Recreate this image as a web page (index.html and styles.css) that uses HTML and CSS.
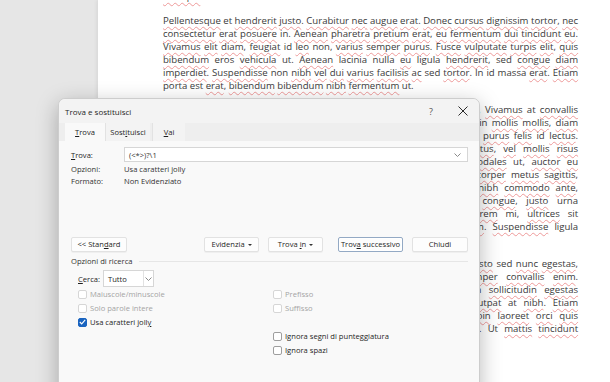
FILE: index.html
```html
<!DOCTYPE html>
<html lang="it">
  <head>
    <meta charset="utf-8" />
    <title>Trova e sostituisci</title>
    <link rel="stylesheet" href="styles.css">
  </head>
  <body>
    <div class="page">
      <div class="doc">
        <p>
          <span class="ln end"><u>tristique</u>.</span>
        </p>
        <p>
          <span class="ln"><u>Pellentesque</u> et <u>hendrerit</u> <u>justo</u>. <u>Curabitur</u> <u>nec</u> <u>augue</u> <u>erat</u>. <u>Donec</u> <u>cursus</u> <u>dignissim</u> <u>tortor</u>, <u>nec</u></span>
          <span class="ln"><u>consectetur</u> <u>erat</u> <u>posuere</u> in. <u>Aenean</u> <u>pharetra</u> <u>pretium</u> <u>erat</u>, <u>eu</u> <u>fermentum</u> <u>dui</u> <u>tincidunt</u> <u>eu</u>.</span>
          <span class="ln"><u>Vivamus</u> <u>elit</u> <u>diam</u>, <u>feugiat</u> id <u>leo</u> non, <u>varius</u> <u>semper</u> <u>purus</u>. <u>Fusce</u> <u>vulputate</u> <u>turpis</u> <u>elit</u>, <u>quis</u></span>
          <span class="ln"><u>bibendum</u> eros <u>vehicula</u> ut. <u>Aenean</u> lacinia nulla <u>eu</u> ligula <u>hendrerit</u>, sed <u>congue</u> <u>diam</u></span>
          <span class="ln"><u>imperdiet</u>. <u>Suspendisse</u> non <u>nibh</u> <u>vel</u> <u>dui</u> <u>varius</u> <u>facilisis</u> <u>ac</u> sed <u>tortor</u>. In id massa <u>erat</u>. <u>Etiam</u></span>
          <span class="ln end">porta est <u>erat</u>, <u>bibendum</u> <u>bibendum</u> <u>nibh</u> <u>fermentum</u> ut.</span>
        </p>
        <p>
          <span class="ln">Nam ultricies, lorem in dapibus tincidunt, augue lectus rhoncus nisl, <u>Vivamus</u> at <u>convallis</u></span>
          <span class="ln">nisi sapien quis magna. Donec elementum lectus et quam placerat in <u>mollis</u> <u>mollis</u>, <u>diam</u></span>
          <span class="ln">Integer aliquet tellus a tortor viverra, at tempor nunc posuere non <u>purus</u> <u>felis</u> id <u>lectus</u>.</span>
          <span class="ln">Aliquam erat volutpat. Quisque vitae nibh at nunc pretium <u>lectus</u>, <u>vel</u> <u>mollis</u> <u>risus</u></span>
          <span class="ln">Morbi tristique tempus nisl, eget pulvinar neque vitae nisl in <u>sodales</u> ut, <u>auctor</u> <u>eu</u></span>
          <span class="ln">odio. Nullam tempor, nibh vitae ultrices vestibulum, mauris <u>ullamcorper</u> <u>metus</u> <u>sagittis</u>,</span>
          <span class="ln">nec aliquet lorem sapien ac ipsum. Phasellus pharetra tellus at <u>nibh</u> <u>commodo</u> <u>ante</u>,</span>
          <span class="ln">Etiam gravida lectus vitae magna consequat, sed mollis leo <u>congue</u>, <u>justo</u> urna</span>
          <span class="ln">dignissim elit, vitae luctus nisi sapien sed nulla. Donec ut <u>lorem</u> mi, <u>ultrices</u> sit</span>
          <span class="ln">amet placerat at, condimentum non quam. Praesent a lacus <u>sem</u>. <u>Suspendisse</u> ligula</span>
          <span class="ln end">feugiat ipsum, vitae blandit dui.</span>
        </p>
        <p>
          <span class="ln">Duis efficitur mauris vel mi tristique, ut vehicula nisi pretium. Cras <u>justo</u> sed <u>nunc</u> <u>egestas</u>,</span>
          <span class="ln">ac posuere eros imperdiet. Nunc dictum ac mauris nec <u>semper</u> <u>convallis</u> <u>enim</u>.</span>
          <span class="ln">Maecenas pretium, mi vitae fringilla tincidunt, diam nibh quam <u>sollicitudin</u> <u>egestas</u></span>
          <span class="ln">neque nisl at est. Vestibulum faucibus ipsum ac sapien eu <u>volutpat</u> at <u>nibh</u>. <u>Etiam</u></span>
          <span class="ln">dapibus fermentum lacus, non ullamcorper magna tincidunt. <u>Proin</u> <u>laoreet</u> <u>orci</u> <u>quis</u></span>
          <span class="ln">ex pretium nec. Integer vitae metus in nisl fermentum maximus. Ut <u>mattis</u> <u>tincidunt</u></span>
          <span class="ln end">ante, non gravida justo.</span>
        </p>
      </div>
    </div>

    <div class="dialog">
      <div class="titlebar">
        <span class="title">Trova e sostituisci</span>
        <span class="help">?</span>
        <span class="close">
          <svg width="10" height="10" viewBox="0 0 10 10"><path d="M0.5 0.5 L9.5 9.5 M9.5 0.5 L0.5 9.5" stroke="#2b2b2b" stroke-width="1" fill="none"/></svg>
        </span>
      </div>

      <div class="tabs">
        <span class="tab active"><u>T</u>rova</span>
        <span class="tab">Sost<u>i</u>tuisci</span>
        <span class="tab"><u>V</u>ai</span>
      </div>

      <div class="content">
        <div class="find-row">
          <label><u>T</u>rova:</label>
          <div class="input">
            <span>(&lt;*&gt;)?\1</span>
            <svg class="chev" width="7" height="4" viewBox="0 0 7 4"><path d="M0.5 0.5 L3.5 3.5 L6.5 0.5" stroke="#8a8a8a" fill="none"/></svg>
          </div>
        </div>
        <div class="info">
          <span>Opzioni:</span><span>Usa caratteri jolly</span>
          <span>Formato:</span><span>Non Evidenziato</span>
        </div>

        <div class="buttons">
          <button class="btn std">&lt;&lt; Stan<u>d</u>ard</button>
          <button class="btn evid">Evidenzia <i class="caret"></i></button>
          <button class="btn tin">Trova <u>i</u>n <i class="caret"></i></button>
          <button class="btn next">Trov<u>a</u> successivo</button>
          <button class="btn close-btn">Chiudi</button>
        </div>

        <div class="group">
          <span>Opzioni di ricerca</span>
          <span class="rule"></span>
        </div>

        <div class="search-row">
          <label><u>C</u>erca:</label>
          <div class="select">
            <span>Tutto</span>
            <span class="drop">
              <svg width="7" height="4" viewBox="0 0 7 4"><path d="M0.5 0.5 L3.5 3.5 L6.5 0.5" stroke="#8a8a8a" fill="none"/></svg>
            </span>
          </div>
        </div>

        <div class="opts">
          <span class="opt off"><i class="box"></i>Maiuscole/minuscole</span>
          <span class="opt off"><i class="box"></i>Prefisso</span>
          <span class="opt off"><i class="box"></i>Solo parole intere</span>
          <span class="opt off"><i class="box"></i>Suffisso</span>
          <span class="opt"><i class="box checked"><svg width="7" height="6" viewBox="0 0 7 6"><path d="M0.8 3 L2.7 4.9 L6.2 0.9" stroke="#fff" stroke-width="1.1" fill="none"/></svg></i><span>Usa caratteri joll<u>y</u></span></span>
          <span></span>
          <span></span>
          <span class="opt"><i class="box"></i>Ignora segni di punteggiatura</span>
          <span></span>
          <span class="opt"><i class="box"></i>Ignora spazi</span>
        </div>
      </div>
    </div>
  </body>
</html>
```

FILE: styles.css
```css
*,
*::before,
*::after {
  box-sizing: border-box;
}

body {
  margin: 0;
  width: 610px;
  height: 382px;
  overflow: hidden;
  background: #e6e6e6;
  display: flex;
}

.page {
  margin-left: 98px;
  flex: 1;
  background: #fff;
  box-shadow: -1px 0 4px rgba(0, 0, 0, 0.08);
  padding: 0 33px 0 65px;
}

.doc {
  margin-top: -10px;
  font-family: "Open Sans", sans-serif;
  font-size: 9.6px;
  line-height: 13px;
  color: #3a3a3a;
}

.doc p {
  margin: 0 0 11px;
}

.doc u {
  text-decoration: underline wavy #ee9a9a;
  text-decoration-thickness: 0.6px;
  text-underline-offset: 1.5px;
}

.ln {
  display: block;
  white-space: nowrap;
  text-align: justify;
  text-align-last: justify;
}

.ln.end {
  text-align-last: left;
}

/* dialog */

.dialog {
  position: absolute;
  left: 58px;
  top: 98px;
  width: 422px;
  height: 300px;
  background: #f9f9f9;
  border: 1px solid #cdcdcd;
  border-radius: 7px 7px 0 0;
  box-shadow: 0 6px 22px rgba(0, 0, 0, 0.28);
  font-family: "Open Sans", sans-serif;
  font-size: 7.6px;
  color: #1e1e1e;
}

.dialog u {
  text-decoration: underline;
  text-underline-offset: 1px;
}

.titlebar {
  height: 24px;
  display: flex;
  align-items: center;
  padding-left: 6px;
  background: #f3f3f3;
  border-radius: 7px 7px 0 0;
  font-size: 8px;
}

.title {
  flex: 1;
}

.help {
  width: 20px;
  text-align: center;
  color: #555;
  font-size: 9px;
}

.close {
  width: 32px;
  margin-left: 6px;
  display: flex;
  justify-content: center;
}

.tabs {
  height: 18px;
  display: flex;
  padding-left: 6px;
  background: #eeeeee;
}

.tab {
  display: flex;
  align-items: center;
  justify-content: center;
  width: 45px;
  background: #f3f3f3;
  border-left: 1px solid #e2e2e2;
}

.tab:first-child {
  width: 40px;
  border-left: 0;
}

.tab:last-child {
  width: 33px;
  margin-left: 2px;
}

.tab.active {
  background: #f9f9f9;
}

.content {
  padding: 6px 11px 0 12px;
}

.find-row {
  display: grid;
  grid-template-columns: 53px 1fr;
  align-items: center;
  height: 15px;
}

.input {
  height: 15px;
  display: flex;
  align-items: center;
  justify-content: space-between;
  padding: 0 6px 0 4px;
  background: #fff;
  border: 1px solid #d6d6d6;
  color: #333;
}

.info {
  display: grid;
  grid-template-columns: 53px 1fr;
  line-height: 12px;
  margin-top: 1px;
  color: #333;
}

.buttons {
  display: flex;
  margin-top: 50px;
  height: 15px;
}

.btn {
  height: 15px;
  padding: 0;
  font: inherit;
  line-height: 13px;
  text-align: center;
  color: #1e1e1e;
  background: #fdfdfd;
  border: 1px solid #e2e2e2;
  border-radius: 2px;
  box-shadow: 0 1px 0 rgba(0, 0, 0, 0.04);
}

.std { width: 56px; }
.evid { width: 55px; margin-left: auto; }
.tin { width: 55px; margin-left: 9px; }
.next { width: 65px; margin-left: 15px; border-color: #93a9c4; box-shadow: inset 0 0 0 1px #fff; }
.close-btn { width: 56px; margin-left: 9px; }

.caret {
  display: inline-block;
  vertical-align: middle;
  margin-left: 1px;
  border-left: 2px solid transparent;
  border-right: 2px solid transparent;
  border-top: 2px solid #333;
}

.group {
  display: flex;
  align-items: center;
  margin-top: 3px;
  line-height: 12px;
  color: #333;
}

.rule {
  flex: 1;
  height: 1px;
  margin-left: 6px;
  background: #e6e6e6;
}

.search-row {
  display: flex;
  align-items: center;
  margin-top: 3px;
  padding-left: 7px;
}

.search-row label {
  width: 25px;
}

.select {
  width: 51px;
  height: 17px;
  display: flex;
  align-items: center;
  background: #fff;
  border: 1px solid #d6d6d6;
}

.select span:first-child {
  flex: 1;
  padding-left: 4px;
}

.drop {
  width: 10px;
  height: 100%;
  border-left: 1px solid #e2e2e2;
  display: flex;
  align-items: center;
  justify-content: center;
}

.opts {
  display: grid;
  grid-template-columns: 195px 1fr;
  grid-auto-rows: 14px;
  padding-left: 7px;
}

.opt {
  display: flex;
  align-items: center;
}

.opt.off {
  color: #a4a4a4;
}

.box {
  width: 9px;
  height: 9px;
  margin-right: 3px;
  background: #fff;
  border: 1px solid #9e9e9e;
  border-radius: 2px;
  display: flex;
  align-items: center;
  justify-content: center;
}

.opt.off .box {
  border-color: #d6d6d6;
}

.box.checked {
  background: #1a64c0;
  border-color: #1a64c0;
}
```
